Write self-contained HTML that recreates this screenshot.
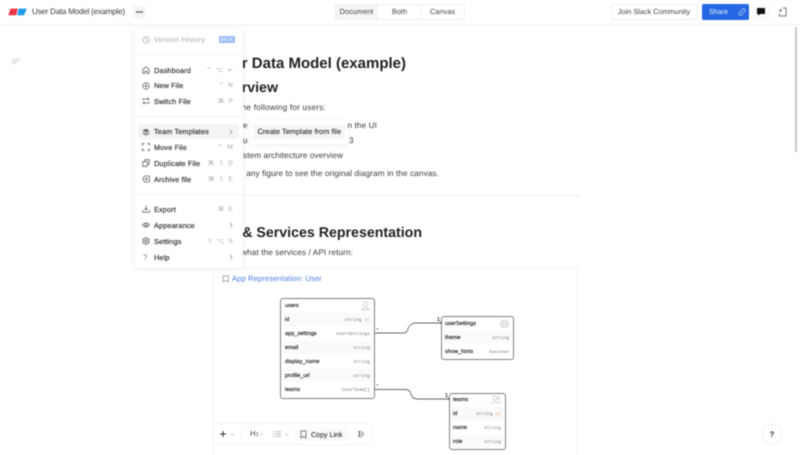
<!DOCTYPE html>
<html><head><meta charset="utf-8"><title>User Data Model (example)</title>
<style>
html,body{margin:0;padding:0;width:800px;height:455px;overflow:hidden;background:#fff}
#r{position:relative;width:800px;height:455px;overflow:hidden;font-family:"Liberation Sans",sans-serif;color:#333;text-rendering:geometricPrecision;filter:blur(.45px)}
#r div,#r svg{position:absolute}
.t{white-space:nowrap;line-height:12px;height:12px}
.m{font-size:7.3px;color:#333;font-weight:400;-webkit-text-stroke:.18px #333;left:154px;letter-spacing:.14px}
.k{font-size:6.5px;color:#a8a8a8;right:566px;letter-spacing:1.2px}
.h1{font-weight:700;color:#222;right:394px;font-size:15px;line-height:20px;height:20px}
.h2{font-size:14.2px}
.p{font-size:8.2px;color:#3a3a3a;letter-spacing:.1px}
.sep{left:134px;width:109px;height:1px;background:#f2f2f2}
.n{font-size:5.6px;color:#222;-webkit-text-stroke:.15px #222;line-height:8px;height:8px}
.c{font-family:"Liberation Mono",monospace;font-size:4.7px;color:#808080;line-height:8px;height:8px}
.rw{background:#fafafa;height:13px}
.box{border:1.4px solid #808080;border-radius:3px;background:#fff;box-sizing:border-box}
.btn{font-size:7.4px;color:#444;text-align:center;line-height:16px;height:16px;box-sizing:border-box}
svg.i{fill:none;stroke:#666;stroke-width:.8}
</style></head><body><div id="r">

<!-- top bar -->
<div style="left:0;top:24px;width:800px;height:1px;background:#f1f1f1"></div>
<svg style="left:8px;top:8px" width="19" height="8" viewBox="0 0 19 8"><path d="M2.500 .6H9.800L8.200 7.200H0.400Z" fill="#ef3345"/><path d="M10.600 .6H18.800L16 7.200H9.200Z" fill="#1c9be8"/></svg>
<div class="t" style="left:32px;top:6px;font-size:8px;color:#3a3a3a;letter-spacing:-.2px">User Data Model (example)</div>
<div style="left:133px;top:6px;width:13px;height:12px;background:#f5f5f5;border-radius:2px"></div>
<svg style="left:133px;top:6px" width="13" height="12"><circle cx="4" cy="6" r=".9" fill="#333"/><circle cx="6.500" cy="6" r=".9" fill="#333"/><circle cx="9" cy="6" r=".9" fill="#333"/></svg>

<div style="left:335px;top:4px;width:130px;height:16px;border:1px solid #f0f0f0;border-radius:2px;box-sizing:border-box"></div>
<div style="left:336px;top:5px;width:42px;height:14px;background:#f5f5f5"></div>
<div style="left:421px;top:5px;width:1px;height:14px;background:#f0f0f0"></div>
<div class="btn" style="left:335px;top:4px;width:43px">Document</div>
<div class="btn" style="left:378px;top:4px;width:43px">Both</div>
<div class="btn" style="left:421px;top:4px;width:43px">Canvas</div>

<div class="btn" style="left:611px;top:4px;width:86px;border:1px solid #f0f0f0;border-radius:2px;line-height:14px;font-size:7.3px">Join Slack Community</div>
<div style="left:702px;top:4px;width:47px;height:16px;background:#2566e3;border-radius:2px"></div>
<div class="t" style="left:709px;top:6px;font-size:7.2px;color:#e8effc">Share</div>
<svg style="left:738px;top:8px" width="8" height="8" viewBox="0 0 8 8" fill="none" stroke="#b9cdf6" stroke-width=".8"><path d="M3.200 4.800 4.800 3.200M3 2.400 4.200 1.200a1.500 1.500 0 0 1 2.400 2.400L5.400 4.900M5 5.600 3.800 6.800A1.500 1.500 0 0 1 1.400 4.400L2.600 3.100"/></svg>
<div style="left:752px;top:4px;width:18px;height:16px;background:#fafafa;border-radius:2px"></div>
<svg style="left:756px;top:7px" width="10" height="10" viewBox="0 0 10 10"><path d="M1 1H9V7H4L2.200 8.800V7H1Z" fill="#111"/></svg>
<svg style="left:778px;top:7px" width="9" height="10" viewBox="0 0 9 10" fill="none" stroke="#555" stroke-width=".8"><path d="M4.500 1H8V9H1.500V6.500M1 3.500H4M2.500 2V5"/></svg>
<div style="left:794.5px;top:27px;width:2.500px;height:125px;background:#c8c8c8"></div>

<!-- outline icon -->
<svg style="left:12px;top:59px" width="9" height="6" fill="none" stroke="#c4c4c4" stroke-width=".7"><path d="M0 .5H8.500M0 2.500H6M0 4.500H4"/></svg>

<!-- document -->
<div class="t h1" style="top:53.500px">User Data Model (example)</div>
<div class="t h1 h2" style="top:77.500px;right:522px">Overview</div>
<div class="t p" style="top:101.500px;right:474px;letter-spacing:.2px">We provide the following for users:</div>
<div class="t p" style="top:119.500px;left:243px">e</div>
<div class="t p" style="top:119.500px;right:423px">n the UI</div>
<div class="t p" style="top:134.500px;left:243px">u</div>
<div class="t p" style="top:134.500px;left:349px">3</div>
<div class="t p" style="top:149.500px;right:457px">System architecture overview</div>
<div class="t p" style="top:167.500px;right:361px">any figure to see the original diagram in the canvas.</div>
<div style="left:214px;top:195px;width:366px;height:1px;background:#efefef"></div>
<div class="t h1 h2" style="top:222.500px;right:378px">APIs &amp; Services Representation</div>
<div class="t p" style="top:246.500px;right:447px">This is what the services / API return:</div>

<div style="left:213px;top:267px;width:365px;height:200px;border:1px solid #f3f3f3;border-radius:2px;box-sizing:border-box"></div>
<svg style="left:222px;top:275px" width="8" height="8" fill="none" stroke="#888" stroke-width=".7"><path d="M1 1H6.500V7L3.700 5.500 1 7Z"/></svg>
<div class="t" style="left:232px;top:273px;font-size:7.6px;color:#4a7fe8;letter-spacing:.1px">App Representation: User</div>

<!-- connectors -->
<svg style="left:370px;top:315px" width="85" height="90" fill="none" stroke="#666" stroke-width=".9"><path d="M3 18H33Q37 18 38 14T44 8H71"/><path d="M3 74.500H35Q40 74.500 41 79T47 84H79"/><circle cx="3" cy="18" r="1.200" fill="#111" stroke="none"/><circle cx="3" cy="74.500" r="1.200" fill="#111" stroke="none"/><circle cx="71.500" cy="8" r="1.200" fill="#111" stroke="none"/><circle cx="79.500" cy="84" r="1.200" fill="#111" stroke="none"/><circle cx="7.500" cy="14" r=".6" fill="#111" stroke="none"/><circle cx="7.500" cy="70" r=".6" fill="#111" stroke="none"/></svg>
<div class="n" style="left:437px;top:316px">1</div>
<div class="n" style="left:445px;top:392px">1</div>

<!-- users -->
<div class="box" style="left:280px;top:298px;width:95px;height:101px"></div>
<div class="rw" style="left:282px;top:313px;width:91px"></div>
<div class="rw" style="left:282px;top:341px;width:91px"></div>
<div class="rw" style="left:282px;top:369px;width:91px"></div>
<div class="n" style="left:285px;top:302px">users</div>
<svg class="i" style="left:361px;top:301px;stroke:#bbb;stroke-width:.7" width="9" height="10"><circle cx="4.500" cy="3" r="2.200"/><path d="M1 9C1 6 8 6 8 9Z"/></svg>
<div class="n" style="left:285px;top:316px">id</div><div class="c" style="right:430px;top:317px">string <span style="color:#eeb58c">pk</span></div>
<div class="n" style="left:285px;top:330px">app_settings</div><div class="c" style="right:430px;top:331px">UserSettings</div>
<div class="n" style="left:285px;top:344px">email</div><div class="c" style="right:430px;top:345px">string</div>
<div class="n" style="left:285px;top:358px">display_name</div><div class="c" style="right:430px;top:359px">string</div>
<div class="n" style="left:285px;top:372px">profile_url</div><div class="c" style="right:430px;top:373px">string</div>
<div class="n" style="left:285px;top:386px">teams</div><div class="c" style="right:430px;top:387px">UserTeam[]</div>

<!-- userSettings -->
<div class="box" style="left:441px;top:316px;width:73px;height:44px"></div>
<div class="rw" style="left:443px;top:330px;width:69px"></div>
<div class="n" style="left:445px;top:320px">userSettings</div>
<svg class="i" style="left:500px;top:319px;stroke:#bbb;stroke-width:.7" width="9" height="10"><path d="M4.500 .8 8 2.800V7L4.500 9 1 7V2.800Z"/><circle cx="4.500" cy="4.900" r="1.600"/></svg>
<div class="n" style="left:445px;top:334px">theme</div><div class="c" style="right:291px;top:335px">string</div>
<div class="n" style="left:445px;top:348px">show_hints</div><div class="c" style="right:291px;top:349px">boolean</div>

<!-- teams -->
<div class="box" style="left:449px;top:393px;width:57px;height:57px"></div>
<div class="rw" style="left:451px;top:407px;width:53px"></div>
<div class="rw" style="left:451px;top:435px;width:53px;height:13px"></div>
<div class="n" style="left:453px;top:396px">teams</div>
<svg class="i" style="left:491px;top:395px;stroke:#bbb;stroke-width:.7" width="10" height="10"><circle cx="4" cy="3" r="2"/><path d="M.8 9C.8 6 7.200 6 7.200 9M7 1.200A2 2 0 0 1 7 4.800M8 6.200C9.200 6.800 9.500 8 9.500 9"/></svg>
<div class="n" style="left:453px;top:410px">id</div><div class="c" style="right:299px;top:411px">string <span style="color:#eeb58c">pk</span></div>
<div class="n" style="left:453px;top:424px">name</div><div class="c" style="right:299px;top:425px">string</div>
<div class="n" style="left:453px;top:438px">role</div><div class="c" style="right:299px;top:439px">string</div>

<!-- toolbar -->
<div style="left:213px;top:423px;width:159px;height:22px;background:#fff;border:1px solid #f3f3f3;border-radius:2px;box-sizing:border-box"></div>
<svg style="left:219px;top:430px" width="8" height="8" stroke="#333" stroke-width="1"><path d="M4 1V7M1 4H7"/></svg>
<svg style="left:230px;top:433px" width="5" height="3" fill="none" stroke="#bbb" stroke-width=".6"><path d="M.7.7 2.500 2.200 4.300.7"/></svg>
<div style="left:241px;top:429px;width:1px;height:10px;background:#f0f0f0"></div>
<div class="t" style="left:250px;top:428px;font-size:7.800px;color:#444">H<span style="font-size:5.800px">1</span></div>
<svg style="left:259px;top:433px" width="5" height="3" fill="none" stroke="#bbb" stroke-width=".6"><path d="M.7.7 2.500 2.200 4.300.7"/></svg>
<svg style="left:273px;top:431px" width="8" height="6" fill="none" stroke="#999" stroke-width=".7"><path d="M0 .7H1.300M2.500 .7H8M0 3H1.300M2.500 3H8M0 5.300H1.300M2.500 5.300H8"/></svg>
<svg style="left:284px;top:433px" width="5" height="3" fill="none" stroke="#bbb" stroke-width=".6"><path d="M.7.7 2.500 2.200 4.300.7"/></svg>
<div style="left:295px;top:428px;width:54px;height:13px;background:#fafafa;border-radius:2px"></div>
<svg style="left:300px;top:430px" width="7" height="9" fill="none" stroke="#555" stroke-width=".7"><path d="M1 1H6V8L3.500 6.300 1 8Z"/></svg>
<div class="t" style="left:311px;top:429px;font-size:7.100px;color:#333;-webkit-text-stroke:.1px #333">Copy Link</div>
<svg style="left:357px;top:430px" width="8" height="8" fill="none" stroke="#555" stroke-width=".7"><path d="M1 1.500 3.500 4 1 6.500M4 1 6.500 4 4 7M2.500.5V7.500"/></svg>

<!-- help -->
<div style="left:763px;top:425px;width:18px;height:18px;border-radius:50%;background:#fff;box-shadow:0 0 3px rgba(0,0,0,.12)"></div>
<div class="t" style="left:763px;top:429px;width:18px;text-align:center;font-size:8px;font-weight:700;color:#333">?</div>

<!-- menu -->
<div style="left:134px;top:28px;width:109px;height:240px;background:#fff;border-radius:3px;box-shadow:0 1px 6px rgba(0,0,0,.09)"></div>
<svg class="i" style="left:142px;top:36px;stroke:#b0b0b0" width="8" height="8"><circle cx="4" cy="4" r="3.200"/><path d="M4 2V4.200L5.400 5"/></svg>
<div class="t m" style="top:34px;color:#aaa;-webkit-text-stroke:0">Version History</div>
<div style="left:219px;top:36px;width:16px;height:7px;background:#9dbcf3;border-radius:1.500px;font-size:4.400px;font-weight:700;color:#e8f0fd;text-align:center;line-height:7px;letter-spacing:.2px">BETA</div>
<div class="sep" style="top:54px"></div>
<div class="sep" style="top:116px"></div>
<div class="sep" style="top:194px"></div>
<div style="left:138px;top:124px;width:101px;height:15px;background:#f4f4f4;border-radius:3px"></div>

<svg class="i" style="left:142px;top:66px" width="8" height="8"><path d="M.8 3.600 4 .8 7.200 3.600V7.300H5V5H3V7.300H.8Z"/></svg>
<div class="t m" style="top:64.500px">Dashboard</div><div class="t k" style="top:64.500px">⌃ ⌥ ⇐</div>
<svg class="i" style="left:142px;top:82px" width="8" height="8"><circle cx="4" cy="4" r="3.200"/><path d="M4 2.200V5.800M2.200 4H5.800"/></svg>
<div class="t m" style="top:80px">New File</div><div class="t k" style="top:80px">⌃ N</div>
<svg class="i" style="left:142px;top:97px" width="8" height="8"><path d="M1 3.500V2H6.800M5.500.8 6.900 2 5.500 3.200M7 4.500V6H1.200M2.500 4.800 1.100 6 2.500 7.200"/></svg>
<div class="t m" style="top:95.500px">Switch File</div><div class="t k" style="top:95.500px">⌘ P</div>

<svg style="left:142px;top:127.500px" width="8" height="8"><path d="M4 .8 7.500 2.600 4 4.400 .5 2.600Z" fill="#666"/><path d="M.8 4.200 4 5.800 7.200 4.200M.8 5.600 4 7.200 7.200 5.600" fill="none" stroke="#666" stroke-width=".7"/></svg>
<div class="t m" style="top:125.500px">Team Templates</div>
<svg style="left:229px;top:129px" width="4" height="6" fill="none" stroke="#888" stroke-width=".7"><path d="M1 .8 3 3 1 5.200"/></svg>
<svg class="i" style="left:142px;top:143px;stroke-width:.9" width="8" height="8"><path d="M.6 2.600V.6H2.600M5.400.6H7.400V2.600M.6 5.400V7.400H2.600M5.400 7.400H7.400V5.400"/></svg>
<div class="t m" style="top:141.500px">Move File</div><div class="t k" style="top:141.500px">⌃ M</div>
<svg class="i" style="left:142px;top:159px" width="8" height="8"><path d="M2.700 2.700V.7H7.300V5.300H5.300M.7 2.700H5.300V7.300H.7Z"/></svg>
<div class="t m" style="top:157.500px">Duplicate File</div><div class="t k" style="top:157.500px">⌘ ⇧ D</div>
<svg class="i" style="left:142px;top:175px" width="8" height="8"><path d="M2.500 1H7.400V7H2.500L.6 4Z"/><circle cx="4.400" cy="4" r="1"/></svg>
<div class="t m" style="top:173.500px">Archive file</div><div class="t k" style="top:173.500px">⌘ ⇧ E</div>

<svg class="i" style="left:142px;top:205px" width="8" height="8"><path d="M4 .6V5M2.400 3.400 4 5 5.600 3.400M.7 5V7.200H7.300V5"/></svg>
<div class="t m" style="top:203.500px">Export</div><div class="t k" style="top:203.500px">⌘ E</div>
<svg class="i" style="left:142px;top:221px" width="8" height="8"><path d="M.5 4C2.500 1.200 5.500 1.200 7.500 4 5.500 6.800 2.500 6.800.5 4Z"/><circle cx="4" cy="4" r="1.100"/></svg>
<div class="t m" style="top:219.500px">Appearance</div>
<svg style="left:229px;top:222px" width="4" height="6" fill="none" stroke="#888" stroke-width=".7"><path d="M1 .8 3 3 1 5.200"/></svg>
<svg class="i" style="left:142px;top:237px;stroke-width:.9" width="8" height="8"><path d="M4 .6 7 2.300V5.700L4 7.400 1 5.700V2.300Z"/><circle cx="4" cy="4" r="1.100"/></svg>
<div class="t m" style="top:235.500px">Settings</div><div class="t k" style="top:235.500px">⇧ ⌥ S</div>
<div class="t" style="left:143px;top:251.500px;font-size:8px;color:#777">?</div>
<div class="t m" style="top:251.500px">Help</div>
<svg style="left:229px;top:254px" width="4" height="6" fill="none" stroke="#888" stroke-width=".7"><path d="M1 .8 3 3 1 5.200"/></svg>

<!-- submenu -->
<div style="left:250px;top:120px;width:98px;height:24px;background:#fff;border-radius:3px;box-shadow:0 1px 5px rgba(0,0,0,.08)"></div>
<div style="left:253px;top:125px;width:92px;height:14px;background:#f6f6f6;border-radius:2px"></div>
<div class="t" style="left:257.500px;top:126px;font-size:7.500px;color:#333;-webkit-text-stroke:.12px #333">Create Template from file</div>

</div></body></html>
